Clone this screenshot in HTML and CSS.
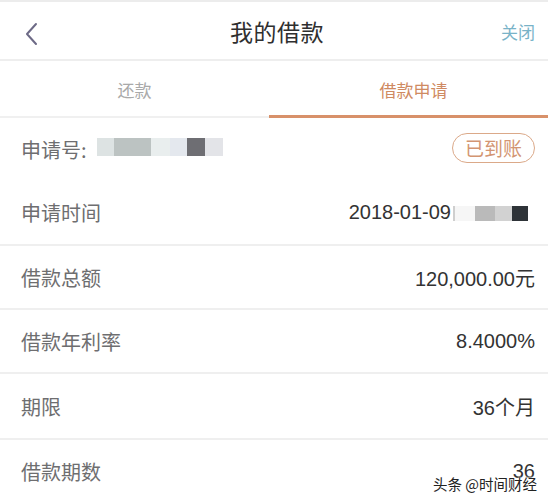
FILE: index.html
```html
<!DOCTYPE html>
<html lang="zh">
<head>
<meta charset="utf-8">
<link rel="stylesheet" href="styles.css">
</head>
<body>
<div class="page">
  <header class="nav">
    <svg class="back" width="14" height="24" viewBox="0 0 14 24"><path d="M12 2 L3 12 L12 22" fill="none" stroke="#6d6a86" stroke-width="2" stroke-linecap="round" stroke-linejoin="round"/></svg>
    <h1 class="title">我的借款</h1>
    <span class="close">关闭</span>
  </header>
  <nav class="tabs">
    <div class="tab">还款</div>
    <div class="tab active">借款申请</div>
  </nav>
  <section class="group first">
    <div class="row">
      <div class="label">申请号:<span class="mask">
        <i style="background:#dde3e3;width:17px"></i><i style="background:#bcc3c2;width:37px"></i><i style="background:#e9eeee;width:19px"></i><i style="background:#e4e8ee;width:17px"></i><i style="background:#6e6e73;width:18px"></i><i style="background:#e3e4e8;width:18px"></i>
      </span></div>
      <span class="badge">已到账</span>
    </div>
    <div class="row">
      <div class="label">申请时间</div>
      <div class="value">2018-01-09<span class="mask2"><i style="background:#cfcfcf;width:2px"></i><i style="background:#f6f6f6;width:20px"></i><i style="background:#bababa;width:20px"></i><i style="background:#d2d2d2;width:17px"></i><i style="background:#2e3338;width:16px"></i></span></div>
    </div>
  </section>
  <div class="row line"><div class="label">借款总额</div><div class="value">120,000.00元</div></div>
  <div class="row line"><div class="label">借款年利率</div><div class="value">8.4000%</div></div>
  <div class="row line tall"><div class="label">期限</div><div class="value">36个月</div></div>
  <div class="row line"><div class="label">借款期数</div><div class="value">36</div></div>
  <div class="watermark">头条 @时间财经</div>
</div>
</body>
</html>
```
FILE: styles.css
```css
html, body { margin: 0; padding: 0; background: #fff; }
body { font-family: "Noto Sans CJK SC", "Liberation Sans", sans-serif; overflow: hidden; }
.page { position: relative; width: 548px; height: 500px; border-top: 2px solid #ececec; box-sizing: border-box; }
.nav { height: 57px; display: flex; align-items: center; justify-content: center; position: relative; border-bottom: 2px solid #eeeeee; }
.back { position: absolute; left: 24px; top: 20px; }
.title { margin: 0 0 0 6px; font-size: 23px; font-weight: 400; color: #2f2f2f; letter-spacing: 0.5px; }
.close { position: absolute; right: 13px; top: 17px; font-size: 17px; color: #79b3c8; }
.tabs { display: flex; height: 55px; border-bottom: 2px solid #f0f0f0; }
.tab { flex: 1; display: flex; align-items: center; justify-content: center; font-size: 17px; color: #a9a9a9; padding-top: 2px; box-sizing: border-box; }
.tab.active { color: #cf8a62; border-bottom: 3px solid #d8916a; margin-bottom: -2px; padding-left: 10px; }
.row { display: flex; align-items: center; justify-content: space-between; padding: 0 13px 0 21px; height: 64px; }
.group.first .row:first-child { height: 62px; }
.group.first .row:last-child { height: 64px; }
.row.line { border-top: 2px solid #efefef; height: 62px; }
.row.line.tall { height: 64px; }
.label { font-size: 20px; color: #6e6e70; display: flex; align-items: center; }
.value { font-size: 20px; color: #333; font-family: "Liberation Sans", "Noto Sans CJK SC", sans-serif; display: flex; align-items: center; }
.mask { display: inline-flex; height: 18px; margin-left: 10px; margin-top: -4px; }
.mask i, .mask2 i { display: block; height: 100%; }
.mask2 { display: inline-flex; height: 15px; margin-left: 2px; margin-right: 7px; margin-top: 2px; }
.badge { border: 1.5px solid #dba989; color: #d39572; border-radius: 16px; font-size: 19px; height: 28px; line-height: 28px; padding: 0 12px; margin-top: -3px; }
.watermark { position: absolute; right: 11px; bottom: 6px; font-size: 14.5px; color: #222; text-shadow: 0 0 2px #fff, 0 0 2px #fff, 0 0 3px #fff; }
```
